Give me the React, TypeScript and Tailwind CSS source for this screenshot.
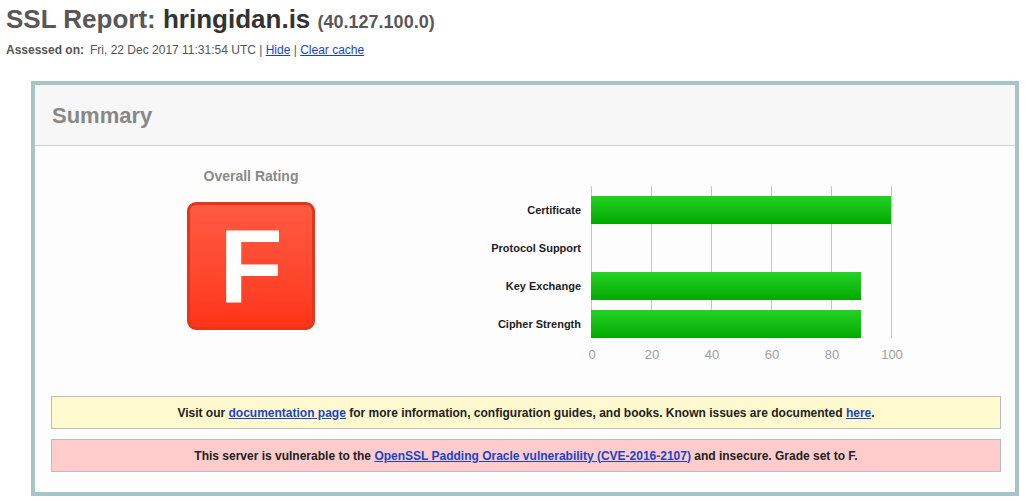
const rows = [
  { label: "Certificate", value: 100 },
  { label: "Protocol Support", value: 0 },
  { label: "Key Exchange", value: 90 },
  { label: "Cipher Strength", value: 90 },
]

const ticks = [0, 20, 40, 60, 80, 100]

function Chart() {
  return (
    <div className="flex mt-[18px]">
      <div className="w-[114px] text-right text-[11px] font-bold text-[#222]">
        {rows.map((r) => (
          <div key={r.label} className="h-[38px] pt-[10px] flex items-center justify-end leading-none">
            {r.label}
          </div>
        ))}
      </div>
      <div className="ml-[10px] w-[301px]">
        <div className="relative h-[152px]">
          {ticks.map((t) => (
            <div key={t} className="absolute top-0 bottom-0 w-px bg-[#c4c4c4]" style={{ left: t * 3 }} />
          ))}
          <div className="relative">
            {rows.map((r) => (
              <div key={r.label} className="h-[38px] pt-[10px]">
                {r.value > 0 && (
                  <div
                    className="h-[28px] bg-gradient-to-b from-[#22d322] to-[#00a900]"
                    style={{ width: r.value * 3 }}
                  />
                )}
              </div>
            ))}
          </div>
        </div>
        <div className="relative h-[24px] text-[13px] text-[#a0a0a0]">
          {ticks.map((t) => (
            <span
              key={t}
              className="absolute top-[9px] leading-[15px] -translate-x-1/2"
              style={{ left: t * 3 + 1 }}
            >
              {t}
            </span>
          ))}
        </div>
      </div>
    </div>
  )
}

export default function App() {
  const link = "text-[#1a44c8] underline"
  return (
    <div className="min-h-screen bg-white" style={{ fontFamily: "'Liberation Sans', Arial, sans-serif" }}>
      <div className="pl-[6px] pt-[4px]">
        <h1 className="text-[26px] font-bold leading-[30px] text-[#585858]">
          SSL Report: <span className="text-[#333]">hringidan.is</span>{" "}
          <span className="text-[18px] text-[#585858]">(40.127.100.0)</span>
        </h1>
        <div className="mt-[6px] text-[12px] leading-[14px] text-[#555]">
          <span className="font-bold">Assessed on:</span>
          <span className="ml-[6px]">Fri, 22 Dec 2017 11:31:54 UTC | </span>
          <a className={link} href="#">Hide</a> | <a className={link} href="#">Clear cache</a>
        </div>
      </div>

      <div className="ml-[31px] mt-[24px] w-[988px] border-4 border-[#a7c4c6] bg-[#fdfdfd]">
        <div className="h-[61px] bg-[#f7f7f7] border-b border-[#cdd3d6] pl-[17px] flex items-center">
          <span className="text-[22px] font-bold text-[#888]">Summary</span>
        </div>

        <div className="flex pt-[21px]">
          <div className="w-[432px] flex flex-col items-center">
            <div className="text-[14px] font-bold leading-[18px] text-[#8a8a8a]">Overall Rating</div>
            <div className="mt-[17px] w-[128px] h-[128px] rounded-[9px] border-[3px] border-[#e1381c] bg-gradient-to-b from-[#ff5a41] to-[#ff3418] flex items-center justify-center">
              <span className="text-[104px] font-bold text-white leading-none">F</span>
            </div>
          </div>
          <div className="pt-[1px]">
            <Chart />
          </div>
        </div>

        <div className="pl-[16px] pr-[14px] pt-[34px] pb-[20px] text-[12px] font-bold text-[#222]">
          <div className="h-[33px] border border-[#bdbdbd] bg-[#fff9cf] flex items-center justify-center">
            <span>
              Visit our <a className={link} href="#">documentation page</a> for more information, configuration guides, and books. Known issues are documented <a className={link} href="#">here</a>.
            </span>
          </div>
          <div className="mt-[10px] h-[33px] border border-[#bdbdbd] bg-[#ffcccc] flex items-center justify-center">
            <span>
              This server is vulnerable to the <a className={link} href="#">OpenSSL Padding Oracle vulnerability (CVE-2016-2107)</a> and insecure. Grade set to F.
            </span>
          </div>
        </div>
      </div>
    </div>
  )
}
